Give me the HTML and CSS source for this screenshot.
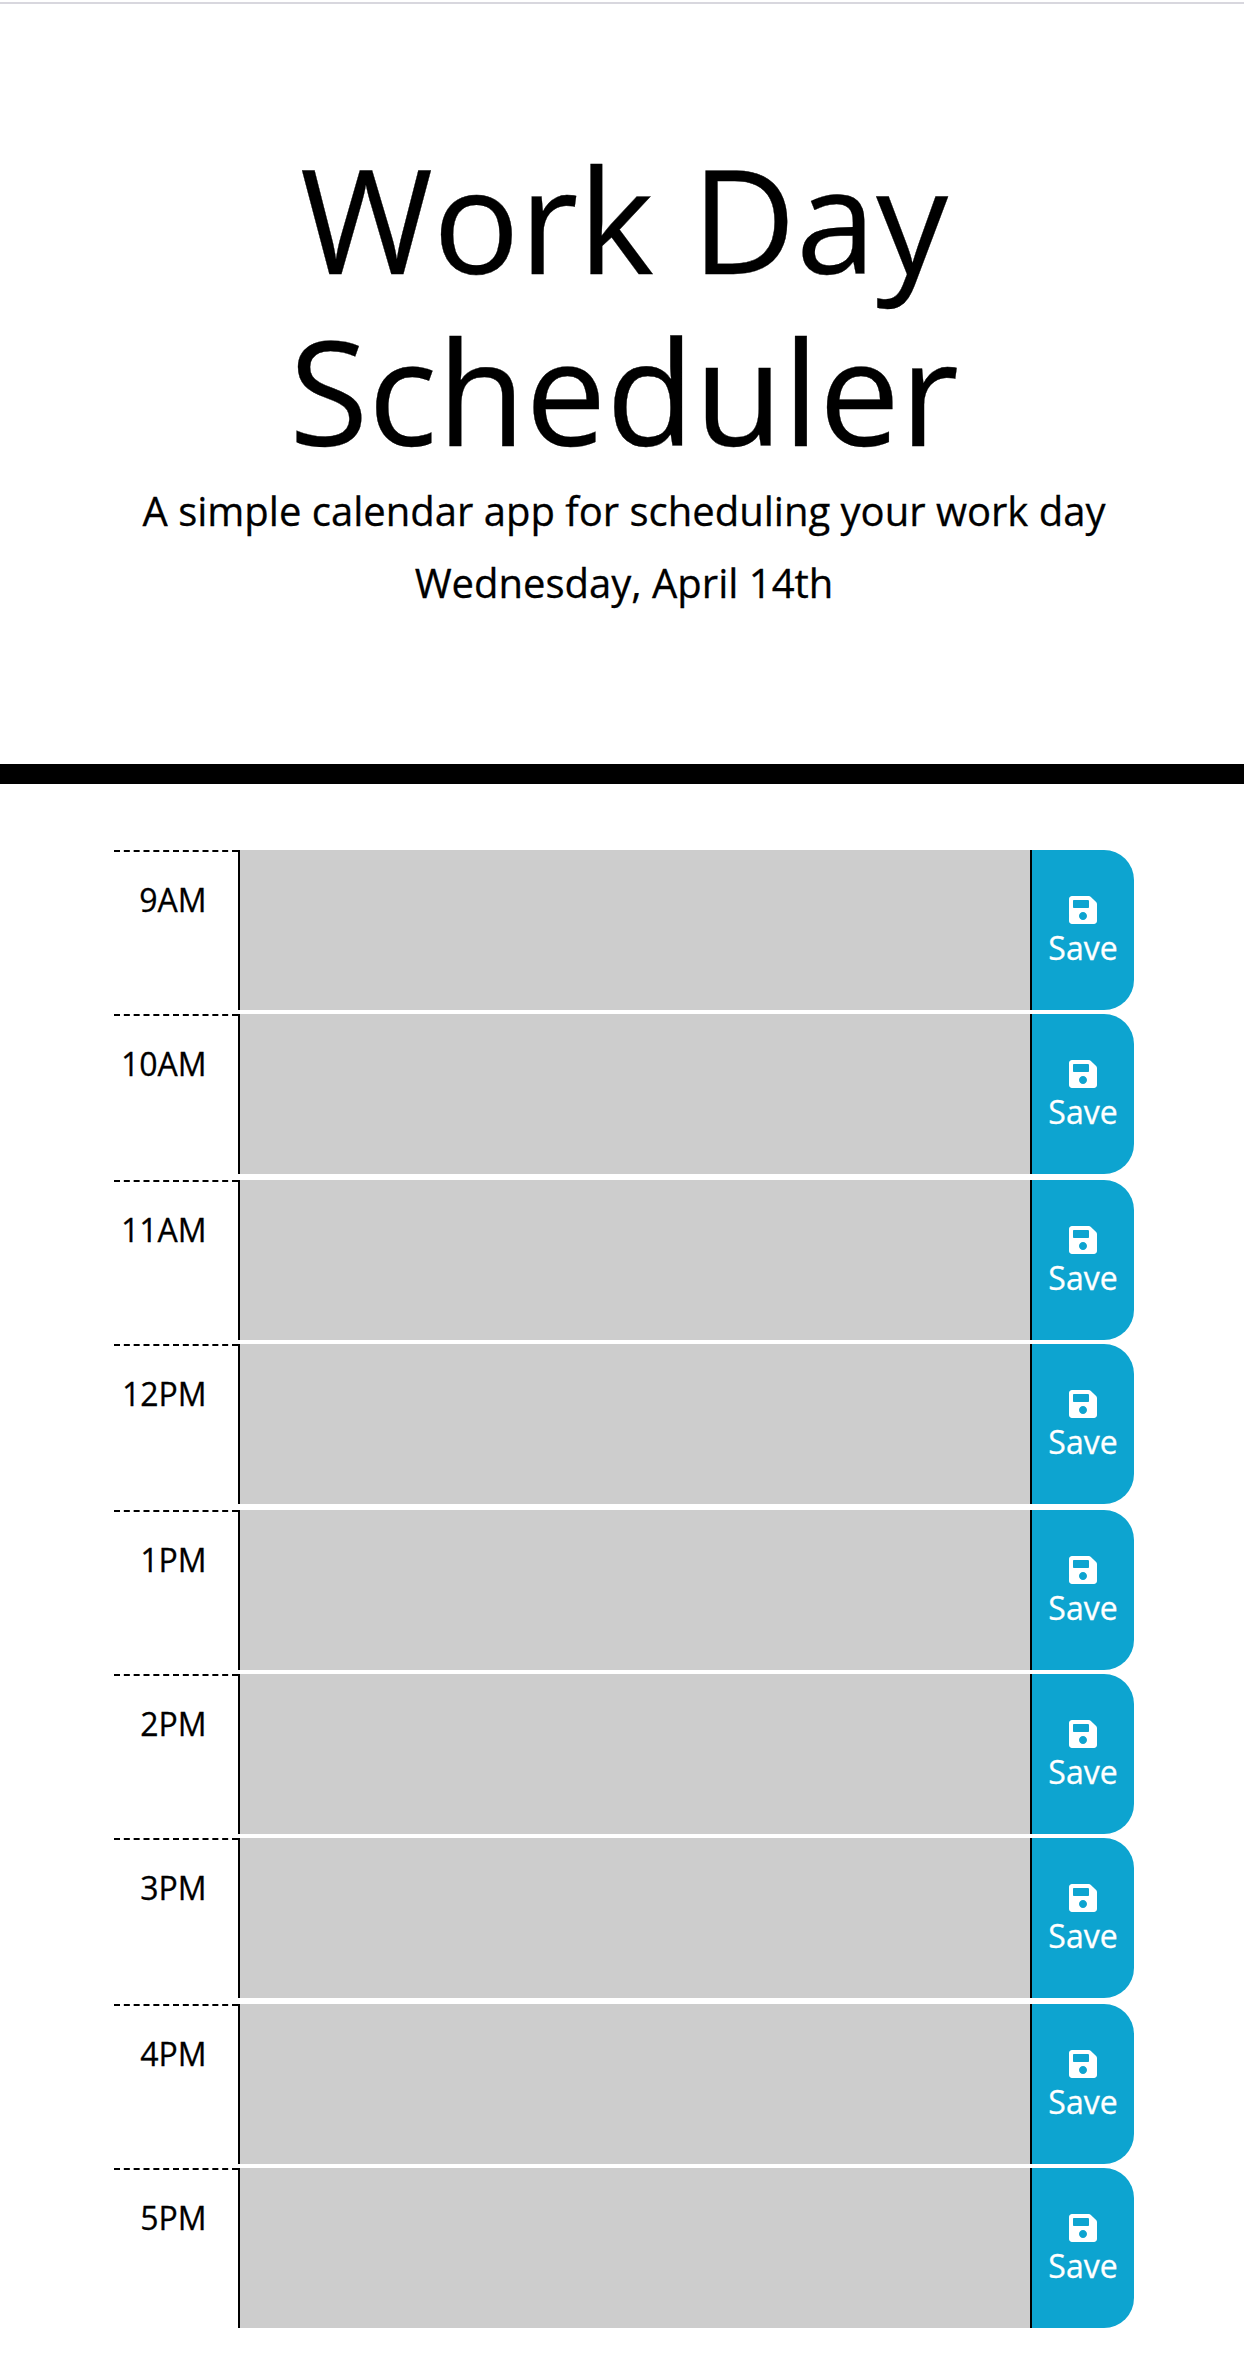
FILE: index.html
```html
<!DOCTYPE html>
<html lang="en">
<head>
<meta charset="utf-8">
<title>Work Day Scheduler</title>
<link rel="stylesheet" href="styles.css">
</head>
<body>
<svg class="sprite" aria-hidden="true">
  <symbol id="save" viewBox="0 0 448 512"><path fill="currentColor" d="M433.941 129.941l-83.882-83.882A48 48 0 0 0 316.118 32H48C21.49 32 0 53.49 0 80v352c0 26.51 21.49 48 48 48h352c26.51 0 48-21.49 48-48V163.882a48 48 0 0 0-14.059-33.941zM224 416c-35.346 0-64-28.654-64-64 0-35.346 28.654-64 64-64s64 28.654 64 64c0 35.346-28.654 64-64 64zm96-304.52V212c0 6.627-5.373 12-12 12H76c-6.627 0-12-5.373-12-12V108c0-6.627 5.373-12 12-12h228.52c3.183 0 6.235 1.264 8.485 3.515l3.48 3.48A11.996 11.996 0 0 1 320 111.48z"/></symbol>
</svg>
<header class="jumbotron">
  <h1 class="title">Work Day Scheduler</h1>
  <p class="lead">A simple calendar app for scheduling your work day</p>
  <p class="lead">Wednesday, April 14th</p>
</header>
<main class="schedule">
  <div class="row"><div class="hour">9AM</div><div class="entry"></div><button class="save"><svg class="icon"><use href="#save"/></svg>Save</button></div>
  <div class="row"><div class="hour">10AM</div><div class="entry"></div><button class="save"><svg class="icon"><use href="#save"/></svg>Save</button></div>
  <div class="row wide"><div class="hour">11AM</div><div class="entry"></div><button class="save"><svg class="icon"><use href="#save"/></svg>Save</button></div>
  <div class="row"><div class="hour">12PM</div><div class="entry"></div><button class="save"><svg class="icon"><use href="#save"/></svg>Save</button></div>
  <div class="row wide"><div class="hour">1PM</div><div class="entry"></div><button class="save"><svg class="icon"><use href="#save"/></svg>Save</button></div>
  <div class="row"><div class="hour">2PM</div><div class="entry"></div><button class="save"><svg class="icon"><use href="#save"/></svg>Save</button></div>
  <div class="row"><div class="hour">3PM</div><div class="entry"></div><button class="save"><svg class="icon"><use href="#save"/></svg>Save</button></div>
  <div class="row wide"><div class="hour">4PM</div><div class="entry"></div><button class="save"><svg class="icon"><use href="#save"/></svg>Save</button></div>
  <div class="row"><div class="hour">5PM</div><div class="entry"></div><button class="save"><svg class="icon"><use href="#save"/></svg>Save</button></div>
</main>
</body>
</html>
```
FILE: styles.css
```css
* {
  box-sizing: border-box;
}

body {
  margin: 0;
  padding-top: 2px;
  background: #fff;
  color: #000;
  font: 32px/48px "Open Sans", sans-serif;
  -webkit-text-stroke: 0.3px currentColor;
}

.sprite {
  display: none;
}

.jumbotron {
  height: 782px;
  padding: 128px 62px 0 66px;
  border-top: 2px solid #d8d7de;
  border-bottom: 20px solid #000;
  text-align: center;
}

.title {
  width: 800px;
  margin: 0 auto 5px;
  font-size: 144px;
  font-weight: 400;
  line-height: 172px;
}

.lead {
  margin: 0 0 12px;
  font-size: 40px;
  line-height: 60px;
}

.schedule {
  width: 1020px;
  margin: 66px 110px 0 114px;
}

.row {
  display: grid;
  grid-template-columns: 124px 794px 102px;
  height: 160px;
  margin-bottom: 4px;
}

.row.wide {
  margin-top: 6px;
}

.hour {
  padding: 24px 31.5px 0 0;
  border-top: 2px dashed #000;
  text-align: right;
}

.entry {
  background: #cdcdcd;
  border: solid #000;
  border-width: 0 2px;
}

.save {
  display: flex;
  flex-direction: column;
  align-items: center;
  padding: 44px 0 0;
  border: 0;
  border-radius: 0 30px 30px 0;
  background: #0da4d0;
  color: #fff;
  font: inherit;
}

.icon {
  flex: none;
  width: 28px;
  height: 32px;
  margin-bottom: -2px;
}
```
